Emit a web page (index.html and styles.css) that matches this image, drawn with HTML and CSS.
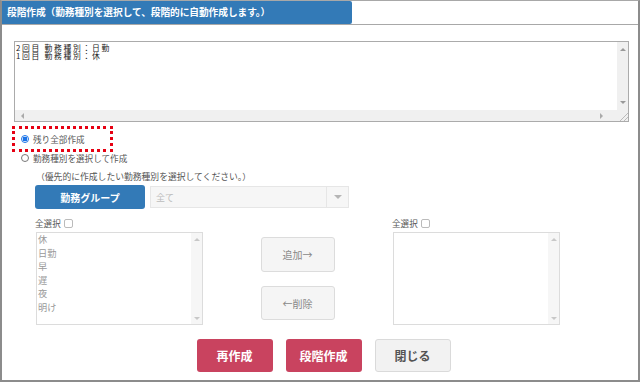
FILE: index.html
```html
<!DOCTYPE html>
<html lang="ja">
<head>
<meta charset="utf-8">
<link rel="stylesheet" href="styles.css">
</head>
<body>
<div class="frame">
  <div class="head"><div class="tab">段階作成（勤務種別を選択して、段階的に自動作成します。）</div></div>
  <div class="main">
    <div class="ta">
      <div class="ta-text"><div class="ln">2回目 勤務種別：日勤</div><div class="ln">1回目 勤務種別：休</div></div>
      <div class="vbar"><span class="tri up"></span><span class="tri down"></span></div>
      <div class="hbar"><span class="tri left"></span><span class="tri right"></span></div>
      <div class="grip"></div>
    </div>
    <div class="opt-box">
      <div class="opt"><span class="radio checked"></span><span>残り全部作成</span></div>
    </div>
    <div class="opt opt2"><span class="radio"></span><span>勤務種別を選択して作成</span></div>
    <div class="sel-area">
      <div class="hint">（優先的に作成したい勤務種別を選択してください。）</div>
      <div class="group-row">
        <div class="btn-blue">勤務グループ</div>
        <div class="select"><span class="sel-val">全て</span><span class="sel-arrow"><span class="tri down big"></span></span></div>
      </div>
      <div class="lists">
        <div class="col">
          <div class="allsel">全選択<span class="chk"></span></div>
          <div class="listbox">
            <div class="items"><div>休</div><div>日勤</div><div>早</div><div>遅</div><div>夜</div><div>明け</div></div>
            <div class="lbar"><span class="tri up light"></span><span class="tri down light"></span></div>
          </div>
        </div>
        <div class="mid">
          <div class="btn-gray">追加→</div>
          <div class="btn-gray">←削除</div>
        </div>
        <div class="col">
          <div class="allsel">全選択<span class="chk"></span></div>
          <div class="listbox">
            <div class="items"></div>
            <div class="lbar"><span class="tri up light"></span><span class="tri down light"></span></div>
          </div>
        </div>
      </div>
    </div>
    <div class="actions">
      <div class="act red">再作成</div>
      <div class="act red">段階作成</div>
      <div class="act grey">閉じる</div>
    </div>
  </div>
</div>
</body>
</html>
```
FILE: styles.css
```css
html, body { margin: 0; padding: 0; background: #fff; }
body { font-family: "Noto Sans CJK JP", "Noto Sans", sans-serif; color: #444; }
.frame {
  width: 640px; height: 382px; box-sizing: border-box;
  border: 2px solid #8c8c8c; border-top: 1px solid #a8a8a8;
  overflow: hidden;
}
.head { height: 23px; border-bottom: 1px solid #a8a8a8; display: flex; }
.tab {
  width: 350px; height: 23px; box-sizing: border-box; background: #337ab7;
  color: #fff; font-size: 9.7px; font-weight: bold; line-height: 23px;
  padding-left: 5px; border-radius: 0 2px 2px 0; letter-spacing: -0.05px;
}
.main { padding: 16px 0 0 10px; }
.ta {
  margin-left: 2px; width: 615px; height: 81px; box-sizing: border-box;
  border: 1px solid #ababab; display: grid;
  grid-template-columns: 1fr 11px; grid-template-rows: 1fr 11px;
}
.ta-text { padding: 2px 0 0 1px; color: #222; }
.ln {
  height: 7.5px; line-height: 7.5px; font-size: 7.8px; letter-spacing: 1.7px;
  white-space: nowrap; overflow: visible;
}
.vbar { background: #f0f0f0; display: flex; flex-direction: column; justify-content: space-between; align-items: center; padding: 6px 0 6px; }
.hbar { background: #f0f0f0; display: flex; justify-content: space-between; align-items: center; padding: 0 14px 0 6px; }
.grip { background: #f0f0f0 linear-gradient(135deg, transparent 60%, #bbb 60%, #bbb 66%, transparent 66%, transparent 78%, #bbb 78%, #bbb 84%, transparent 84%); }
.tri { display: block; width: 0; height: 0; border-style: solid; }
.tri.up { border-width: 0 3px 3px 3px; border-color: transparent transparent #999 transparent; }
.tri.down { border-width: 3px 3px 0 3px; border-color: #999 transparent transparent transparent; }
.tri.left { border-width: 3px 3px 3px 0; border-color: transparent #aaa transparent transparent; }
.tri.right { border-width: 3px 0 3px 3px; border-color: transparent transparent transparent #aaa; }
.tri.light.up { border-bottom-color: #c8c8c8; }
.tri.light.down { border-top-color: #c8c8c8; }
.tri.big { border-width: 4px 4px 0 4px; border-color: #b5b5b5 transparent transparent transparent; }

.opt-box {
  margin-top: 4px; width: 101px; height: 26px; box-sizing: border-box;
  border: 3px dotted #e60012; display: flex; align-items: center; padding-left: 6px;
}
.opt { display: flex; align-items: center; font-size: 8.6px; color: #555; gap: 4px; }
.opt2 { margin-left: 9px; margin-top: 0; height: 12px; }
.radio { width: 8px; height: 8px; border-radius: 50%; border: 1px solid #777; box-sizing: border-box; display: inline-block; background: #fff; }
.radio.checked { border: 1px solid #1a73e8; background: radial-gradient(circle, #1a73e8 0 2.2px, #fff 2.6px); }

.sel-area { padding-left: 23px; }
.hint { font-size: 8.8px; color: #555; margin: 7px 0 0 1px; height: 12px; line-height: 12px; }
.group-row { display: flex; margin-top: 2px; gap: 5px; }
.btn-blue {
  width: 110px; height: 24px; background: #337ab7; color: #fff; border-radius: 3px;
  font-size: 10px; font-weight: bold; display: flex; align-items: center; justify-content: center;
}
.select {
  width: 199px; height: 22px; box-sizing: border-box; background: #f6f6f6;
  border: 1px solid #e6e6e6; display: flex; align-items: center; margin-top: 1px;
}
.sel-val { flex: 1; font-size: 9px; color: #bbb; padding-left: 5px; }
.sel-arrow { width: 21px; height: 100%; border-left: 1px solid #e6e6e6; display: flex; align-items: center; justify-content: center; }

.lists { display: flex; margin-top: 8px; }
.col { width: 167px; }
.allsel { font-size: 8.6px; color: #555; height: 12px; line-height: 12px; display: flex; align-items: center; gap: 3px; }
.chk { width: 7px; height: 7px; border: 1px solid #bbb; border-radius: 2px; display: inline-block; background: #fff; }
.listbox {
  margin-top: 3px; margin-left: 1px; width: 167px; height: 93px; box-sizing: border-box;
  border: 1px solid #dcdcdc; display: flex;
}
.items { flex: 1; font-size: 9.2px; color: #999; line-height: 13.6px; padding-top: 0; }
.items div { padding-left: 1px; }
.lbar { width: 11px; background: #f6f6f6; display: flex; flex-direction: column; justify-content: space-between; align-items: center; padding: 5px 0 4px; box-sizing: border-box; }

.mid { width: 190px; display: flex; flex-direction: column; align-items: center; padding-top: 20px; gap: 14px; padding-left: 1px; box-sizing: border-box; }
.btn-gray {
  width: 74px; height: 35px; box-sizing: border-box; background: #f5f5f5; border: 1px solid #dcdcdc;
  border-radius: 3px; font-size: 10px; color: #888; display: flex; align-items: center; justify-content: center;
}
.btn-gray + .btn-gray { height: 34px; }

.actions { display: flex; justify-content: center; gap: 13px; margin-top: 14px; padding-right: 3px; }
.act {
  width: 76px; height: 33px; box-sizing: border-box; border-radius: 3px; font-size: 12px; font-weight: bold;
  display: flex; align-items: center; justify-content: center;
}
.act.red { background: #c9435f; color: #fff; }
.act.grey { background: #f2f2f2; border: 1px solid #dadada; color: #555; }
```
